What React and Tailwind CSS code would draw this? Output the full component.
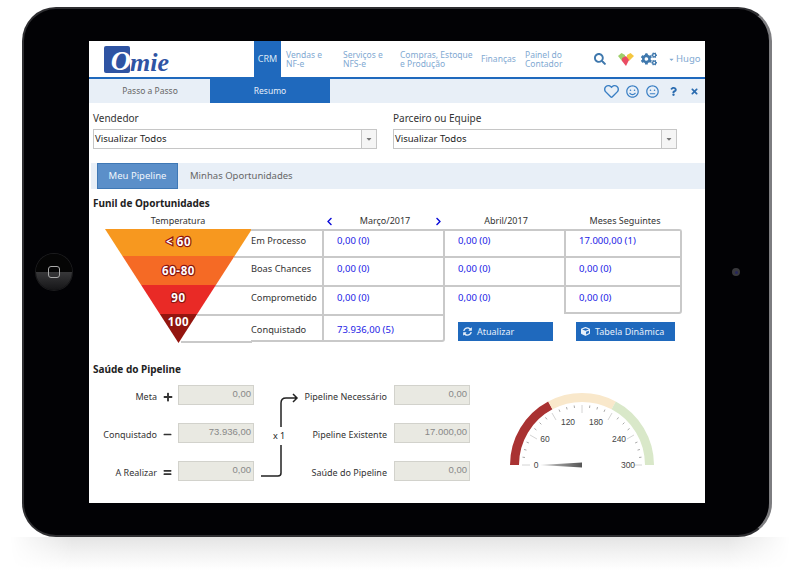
import React from 'react';
import {
  FaSearch, FaCogs, FaCaretDown, FaRegHeart, FaRegSmile, FaRegMeh, FaQuestion, FaTimes,
  FaChevronLeft, FaChevronRight, FaSyncAlt, FaCube, FaPlus, FaMinus, FaEquals,
} from 'react-icons/fa';

const navItems = [
  { lines: ['Vendas e', 'NF-e'], width: 'w-[57px]' },
  { lines: ['Serviços e', 'NFS-e'], width: 'w-[57px]' },
  { lines: ['Compras, Estoque', 'e Produção'], width: 'w-[81px]' },
  { lines: ['Finanças'], width: 'w-[44px]' },
  { lines: ['Painel do', 'Contador'], width: 'w-[60px]' },
];

const funnelBands = [
  { points: '12,0 159,0 141.6,27 29.4,27', fill: '#f7981f' },
  { points: '29.4,27 141.6,27 122.9,56 48.1,56', fill: '#f56a25' },
  { points: '48.1,56 122.9,56 104.2,85 66.8,85', fill: '#e92a26' },
  { points: '66.8,85 104.2,85 85.5,114 ', fill: '#94150f' },
];

const funnelLabels = [
  { text: '< 60', y: 17 },
  { text: '60-80', y: 46 },
  { text: '90', y: 73 },
  { text: '100', y: 97 },
];

function HeartPuzzle() {
  return (
    <svg width="18" height="15" viewBox="0 0 18 15">
      <path d="M1 4 L4.5 1 L8 3 L8 8 L5 9 Z" fill="#9fcf6b" />
      <path d="M10 3 L13.5 1 L17 4 L12 9 L10 7 Z" fill="#f4c63f" />
      <path d="M5 6 L9 4 L12 8 L9 14 L5 9 Z" fill="#ea4c63" />
    </svg>
  );
}

function Select({ width }) {
  return (
    <div className={`flex h-5 ${width} items-center border border-[#c6c6c6] bg-white`}>
      <span className="flex-1 pl-[1px] text-[9.5px] text-[#222]">Visualizar Todos</span>
      <span className="flex h-full w-[15px] items-center justify-center border-l border-[#c6c6c6] bg-[#f5f5f5] text-[#777]">
        <FaCaretDown size={8} />
      </span>
    </div>
  );
}

function ValueCell({ value, className }) {
  return <div className={`border-[#c9c9c9] pl-[13px] text-[9.5px] text-[#1a1ae6] ${className}`}>{value}</div>;
}

function LabelCell({ label, className = '' }) {
  return <div className={`border-t-2 border-[#c9c9c9] text-[9.25px] text-[#333] ${className}`}>{label}</div>;
}

function BlueButton({ icon, label, className }) {
  return (
    <div className={`flex h-[19px] items-center gap-[5px] bg-[#1f69bd] pl-[5px] text-[9px] text-[#e6effa] ${className}`}>
      {icon}
      {label}
    </div>
  );
}

function Funnel() {
  return (
    <svg width="159" height="116" viewBox="0 0 159 116" className="-mr-px shrink-0">
      <g stroke="#c9c9c9" strokeWidth="2">
        <line x1="141" y1="28" x2="159" y2="28" />
        <line x1="122" y1="57" x2="159" y2="57" />
        <line x1="104" y1="86" x2="159" y2="86" />
        <line x1="88" y1="113" x2="159" y2="113" />
      </g>
      {funnelBands.map((b) => (
        <polygon key={b.fill} points={b.points} fill={b.fill} />
      ))}
      {funnelLabels.map((l) => (
        <text
          key={l.text}
          x="85.5"
          y={l.y}
          textAnchor="middle"
          fontFamily="'Noto Sans', sans-serif"
          fontWeight="700"
          fontSize="11.5"
          letterSpacing="0.6"
          fill="#fff"
          stroke="#8f1510"
          strokeWidth="2.4"
          paintOrder="stroke"
        >
          {l.text}
        </text>
      ))}
    </svg>
  );
}

function Gauge() {
  const cx = 73;
  const cy = 73;
  const polar = (r, deg) => {
    const a = (deg * Math.PI) / 180;
    return [cx - r * Math.cos(a), cy - r * Math.sin(a)];
  };
  const arc = (from, to) => {
    const [ax, ay] = polar(72, from);
    const [bx, by] = polar(72, to);
    const [cx2, cy2] = polar(63, to);
    const [dx, dy] = polar(63, from);
    return `M${ax} ${ay} A72 72 0 0 1 ${bx} ${by} L${cx2} ${cy2} A63 63 0 0 0 ${dx} ${dy} Z`;
  };
  const ticks = [];
  for (let i = 0; i <= 24; i++) {
    const major = i % 4 === 0;
    const deg = (i * 180) / 24;
    const [x1, y1] = polar(60, deg);
    const [x2, y2] = polar(major ? 52 : 57.5, deg);
    ticks.push(
      <line key={i} x1={x1} y1={y1} x2={x2} y2={y2} stroke={major ? '#d4d4d4' : '#aaa'} strokeWidth="1" />,
    );
  }
  const labels = [
    { text: '0', x: 27, y: 76 },
    { text: '60', x: 36, y: 50 },
    { text: '120', x: 59, y: 33 },
    { text: '180', x: 87, y: 33 },
    { text: '240', x: 110, y: 50 },
    { text: '300', x: 119, y: 76 },
  ];
  return (
    <svg width="148" height="82" viewBox="0 0 148 82">
      <defs>
        <linearGradient id="needle" x1="0" x2="1" y1="0" y2="0">
          <stop offset="0" stopColor="#ccc" />
          <stop offset="1" stopColor="#555" />
        </linearGradient>
      </defs>
      <path d={arc(0, 62)} fill="#a93232" />
      <path d={arc(62, 118)} fill="#f9e8cb" />
      <path d={arc(118, 180)} fill="#d9e8c9" />
      {ticks}
      {labels.map((l) => (
        <text
          key={l.text}
          x={l.x}
          y={l.y}
          textAnchor="middle"
          fontFamily="'Liberation Sans', sans-serif"
          fontSize="8.5"
          fill="#444"
        >
          {l.text}
        </text>
      ))}
      <polygon points="31,73 73,70.5 73,75.5" fill="url(#needle)" />
    </svg>
  );
}

function ReadOnly({ value }) {
  return (
    <div className="flex h-5 w-[76px] justify-end border border-[#d2d2cc] bg-[#e9e9e2] pr-[2px] pt-[1px] font-['Liberation_Sans',sans-serif] text-[9.5px] text-[#888]">
      {value}
    </div>
  );
}

function HealthRow({ label, icon, value, labelWidth = 'w-[64px]', iconWidth = 'w-[21px]' }) {
  return (
    <div className="flex h-5 items-center">
      <span className={`${labelWidth} whitespace-nowrap pt-[3px] text-right text-[9px] text-[#333]`}>{label}</span>
      <span className={`flex ${iconWidth} justify-center pt-[3px] text-[#333]`}>{icon}</span>
      <ReadOnly value={value} />
    </div>
  );
}

function Screen() {
  return (
    <div className="flex h-[462px] w-[616px] shrink-0 flex-col overflow-hidden bg-white font-['Noto_Sans',sans-serif]">
      {/* header */}
      <div className="flex h-[38px] shrink-0 items-stretch border-b-2 border-[#1f69bd]">
        <div className="flex w-[165px] items-end pb-[4px] pl-[15px]">
          <div className="flex h-[27px] w-[26px] items-end justify-end rounded-[2px] bg-[#2f54a3]">
            <span className="-mb-[2px] -mr-[1px] font-['Liberation_Serif',serif] text-[28px] font-bold italic leading-none text-white">O</span>
          </div>
          <span className="font-['Liberation_Serif',serif] text-[26px] font-bold italic leading-[21px] text-[#2f54a3]">mie</span>
        </div>
        <div className="flex w-[27px] items-center justify-center bg-[#1f69bd] text-[9px] text-[#dce9f7]">CRM</div>
        <div className="flex items-center pl-[5px] text-[8.5px] leading-[9.5px] text-[#7fa9d2]">
          {navItems.map((n) => (
            <div key={n.lines[0]} className={n.width}>
              {n.lines.map((l) => (
                <div key={l} className="whitespace-nowrap">{l}</div>
              ))}
            </div>
          ))}
        </div>
        <div className="flex flex-1 items-center pl-[9px] text-[#3f78ad]">
          <FaSearch size={12} />
          <span className="ml-[11px]"><HeartPuzzle /></span>
          <FaCogs size={16} className="ml-[6px]" />
          <span className="ml-[11px] flex items-center text-[9.5px] text-[#7fa9d2]"><FaCaretDown size={7} className="mr-[1px]" />Hugo</span>
        </div>
      </div>

      {/* steps */}
      <div className="flex h-[24px] shrink-0 bg-[#e8eff7] pl-[1px] text-[8.5px]">
        <div className="flex w-[120px] items-center justify-center text-[#666]">Passo a Passo</div>
        <div className="flex w-[120px] items-center justify-center bg-[#1f69bd] text-[#e6effa]">Resumo</div>
        <div className="flex flex-1 items-center justify-end gap-[7px] pr-[6px] text-[#3a7fc4]">
          <FaRegHeart size={15} />
          <FaRegSmile size={13} />
          <FaRegMeh size={13} />
          <FaQuestion size={9} className="mx-[3px] text-[#2b6cb0]" />
          <FaTimes size={9} className="ml-[2px] text-[#2b6cb0]" />
        </div>
      </div>

      {/* filters */}
      <div className="flex gap-4 pl-1 pt-[8px]">
        <div>
          <div className="mb-[4px] text-[10px] leading-[14px] text-[#333]">Vendedor</div>
          <Select width="w-[284px]" />
        </div>
        <div>
          <div className="mb-[4px] text-[10px] leading-[14px] text-[#333]">Parceiro ou Equipe</div>
          <Select width="w-[284px]" />
        </div>
      </div>

      {/* tabs */}
      <div className="ml-[2px] mt-[14px] flex h-[26px] shrink-0 bg-[#e8eff7] pl-[6px] text-[9.5px]">
        <div className="flex w-[81px] items-center justify-center border border-[#3f78b5] bg-[#5b8fc9] text-[#f1f6fc]">Meu Pipeline</div>
        <div className="flex items-center pl-3 text-[#666]">Minhas Oportunidades</div>
      </div>

      {/* funil */}
      <div className="pl-1">
        <div className="mt-[7px] text-[10px] font-bold leading-[14px] text-[#222]">Funil de Oportunidades</div>
        <div className="mt-[3px] flex h-[16px] items-center text-[9px] text-[#333]">
          <span className="w-[170px] text-center">Temperatura</span>
          <span className="w-[62px]" />
          <span className="flex w-[118px] items-center justify-between">
            <FaChevronLeft size={9} className="text-[#0a0ad8]" />
            <span className="ml-[2px]">Março/2017</span>
            <FaChevronRight size={9} className="text-[#0a0ad8]" />
          </span>
          <span className="w-[126px] text-center">Abril/2017</span>
          <span className="w-[112px] text-center">Meses Seguintes</span>
        </div>
        <div className="flex">
          <Funnel />
          <div className="grid grid-cols-[71px_121px_121px_118px] grid-rows-[27px_29px_29px_28px]">
            <LabelCell label="Em Processo" className="pt-[3px]" />
            <ValueCell value="0,00 (0)" className="border-l-2 border-t-2 pt-[3px]" />
            <ValueCell value="0,00 (0)" className="border-l-2 border-t-2 pt-[3px]" />
            <ValueCell value="17.000,00 (1)" className="rounded-tr-[3px] border-l-2 border-r-2 border-t-2 pt-[3px]" />
            <LabelCell label="Boas Chances" className="pt-[4px]" />
            <ValueCell value="0,00 (0)" className="border-l-2 border-t-2 pt-[4px]" />
            <ValueCell value="0,00 (0)" className="border-l-2 border-t-2 pt-[4px]" />
            <ValueCell value="0,00 (0)" className="border-l-2 border-r-2 border-t-2 pt-[4px]" />
            <LabelCell label="Comprometido" className="pt-[4px]" />
            <ValueCell value="0,00 (0)" className="border-l-2 border-t-2 pt-[4px]" />
            <ValueCell value="0,00 (0)" className="border-l-2 border-t-2 pt-[4px]" />
            <ValueCell value="0,00 (0)" className="rounded-br-[3px] border-b-2 border-l-2 border-r-2 border-t-2 pt-[4px]" />
            <LabelCell label="Conquistado" className="border-b-2 pt-[7px]" />
            <ValueCell value="73.936,00 (5)" className="-mr-[2px] rounded-br-[3px] border-b-2 border-l-2 border-r-2 border-t-2 pt-[7px]" />
            <div className="pl-[15px] pt-[8px]">
              <BlueButton icon={<FaSyncAlt size={9} />} label="Atualizar" className="w-[95px]" />
            </div>
            <div className="pl-[12px] pt-[8px]">
              <BlueButton icon={<FaCube size={9} />} label="Tabela Dinâmica" className="w-[99px]" />
            </div>
          </div>
        </div>
      </div>

      {/* saude */}
      <div className="pl-1">
        <div className="mt-[17px] text-[10px] font-bold leading-[14px] text-[#222]">Saúde do Pipeline</div>
        <div className="mt-[9px] flex">
          <div className="flex flex-col gap-[18px]">
            <HealthRow label="Meta" icon={<FaPlus size={10} />} value="0,00" />
            <HealthRow label="Conquistado" icon={<FaMinus size={9} />} value="73.936,00" />
            <HealthRow label="A Realizar" icon={<FaEquals size={9} />} value="0,00" />
          </div>
          <div className="relative flex h-[96px] w-[47px] shrink-0 items-center justify-center pt-[6px] text-[9px] text-[#222]">
            <svg width="47" height="96" viewBox="0 0 47 96" className="absolute inset-0">
              <path d="M7 91 H24 Q27 91 27 88 V18 Q27 13 32 13 H43 M39 9 L43 13 L39 17" fill="none" stroke="#222" strokeWidth="1.5" />
            </svg>
            <span className="relative ml-[3px] bg-white py-[2px]">x 1</span>
          </div>
          <div className="flex flex-col gap-[18px]">
            <HealthRow label="Pipeline Necessário" value="0,00" labelWidth="w-[86px]" iconWidth="w-[7px]" />
            <HealthRow label="Pipeline Existente" value="17.000,00" labelWidth="w-[86px]" iconWidth="w-[7px]" />
            <HealthRow label="Saúde do Pipeline" value="0,00" labelWidth="w-[86px]" iconWidth="w-[7px]" />
          </div>
          <div className="ml-[39px] mt-[7px]">
            <Gauge />
          </div>
        </div>
      </div>
    </div>
  );
}

export default function App() {
  return (
    <div className="h-[577px] w-[800px] overflow-hidden bg-white pt-[7px]">
      {/* tablet */}
      <div className="ml-[22px] flex h-[530px] w-[750px] items-center rounded-[34px] border-2 border-r-[3px] border-[#2e2e31] border-r-[#7d7d80] bg-[#020205]">
        <div className="flex w-[65px] shrink-0 justify-center pr-[6px]">
          <div className="flex h-9 w-9 items-center justify-center rounded-full bg-gradient-to-b from-[#050505] from-50% via-[#38383a] via-50% to-[#161618] ring-1 ring-[#1c1c1e]">
            <div className="h-3 w-3 rounded-[3px] border border-[#aaa]" />
          </div>
        </div>
        <Screen />
        <div className="flex flex-1 justify-center pr-[2px]">
          <div className="flex h-2 w-2 items-center justify-center rounded-full bg-[#38383c]">
            <div className="h-[3px] w-[3px] rounded-full bg-[#26265c]" />
          </div>
        </div>
      </div>
      {/* reflection */}
      <div className="mx-[10px] h-[33px] bg-gradient-to-b from-[#e4e4e4] via-[#f3f3f3] to-white [mask-image:linear-gradient(to_right,transparent,black_8%,black_92%,transparent)]" />
    </div>
  );
}
